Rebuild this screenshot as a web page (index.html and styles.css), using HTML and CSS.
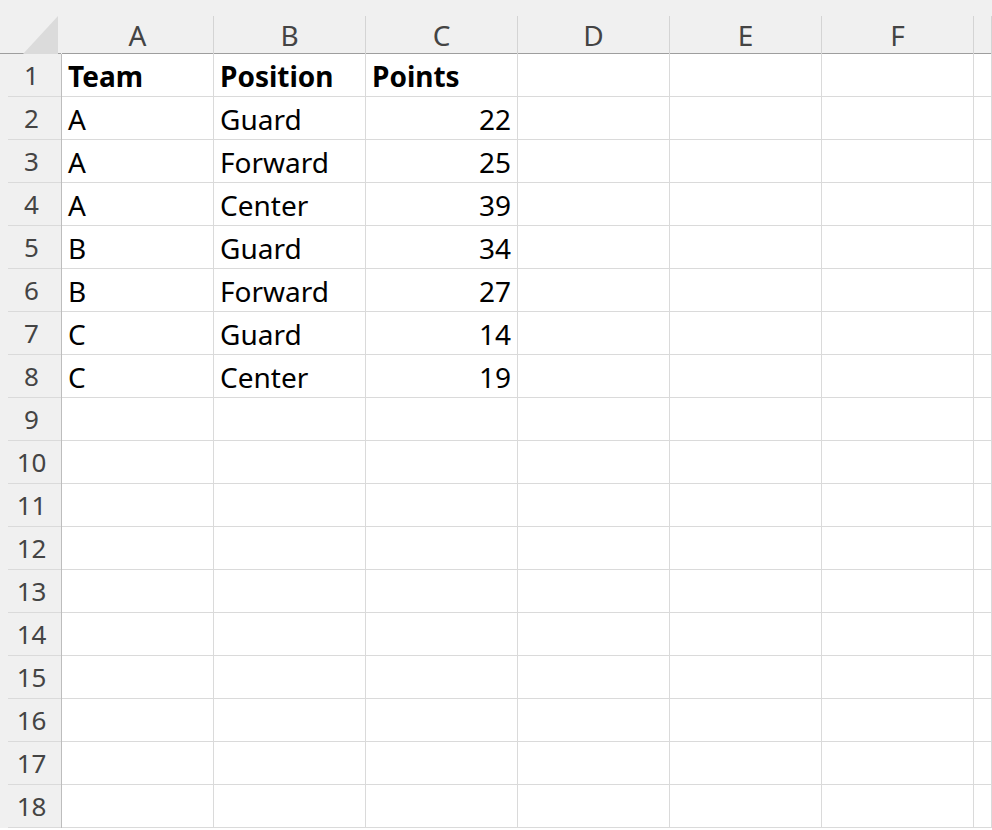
FILE: index.html
```html
<!doctype html>
<html lang="en">
    <head>
        <meta charset="utf-8">
        <title>Sheet1</title>
        <link rel="stylesheet" href="styles.css">
    </head>
    <body>
        <div class="sheet">
            <div class="row colHeads">
                <div class="corner"><div class="triangle"></div></div>
                <div class="colHead"><span>A</span></div>
                <div class="colHead"><span>B</span></div>
                <div class="colHead"><span>C</span></div>
                <div class="colHead"><span>D</span></div>
                <div class="colHead"><span>E</span></div>
                <div class="colHead"><span>F</span></div>
                <div class="colHead"><span></span></div>
            </div>

            <div class="row">
                <div class="rowHead"><span>1</span></div>
                <div class="cell bold">Team</div>
                <div class="cell bold">Position</div>
                <div class="cell bold">Points</div>
                <div class="cell"></div><div class="cell"></div><div class="cell"></div><div class="cell"></div>
            </div>
            <div class="row">
                <div class="rowHead"><span>2</span></div>
                <div class="cell">A</div>
                <div class="cell">Guard</div>
                <div class="cell num">22</div>
                <div class="cell"></div><div class="cell"></div><div class="cell"></div><div class="cell"></div>
            </div>
            <div class="row">
                <div class="rowHead"><span>3</span></div>
                <div class="cell">A</div>
                <div class="cell">Forward</div>
                <div class="cell num">25</div>
                <div class="cell"></div><div class="cell"></div><div class="cell"></div><div class="cell"></div>
            </div>
            <div class="row">
                <div class="rowHead"><span>4</span></div>
                <div class="cell">A</div>
                <div class="cell">Center</div>
                <div class="cell num">39</div>
                <div class="cell"></div><div class="cell"></div><div class="cell"></div><div class="cell"></div>
            </div>
            <div class="row">
                <div class="rowHead"><span>5</span></div>
                <div class="cell">B</div>
                <div class="cell">Guard</div>
                <div class="cell num">34</div>
                <div class="cell"></div><div class="cell"></div><div class="cell"></div><div class="cell"></div>
            </div>
            <div class="row">
                <div class="rowHead"><span>6</span></div>
                <div class="cell">B</div>
                <div class="cell">Forward</div>
                <div class="cell num">27</div>
                <div class="cell"></div><div class="cell"></div><div class="cell"></div><div class="cell"></div>
            </div>
            <div class="row">
                <div class="rowHead"><span>7</span></div>
                <div class="cell">C</div>
                <div class="cell">Guard</div>
                <div class="cell num">14</div>
                <div class="cell"></div><div class="cell"></div><div class="cell"></div><div class="cell"></div>
            </div>
            <div class="row">
                <div class="rowHead"><span>8</span></div>
                <div class="cell">C</div>
                <div class="cell">Center</div>
                <div class="cell num">19</div>
                <div class="cell"></div><div class="cell"></div><div class="cell"></div><div class="cell"></div>
            </div>
            <div class="row">
                <div class="rowHead"><span>9</span></div>
                <div class="cell"></div><div class="cell"></div><div class="cell"></div><div class="cell"></div><div class="cell"></div><div class="cell"></div><div class="cell"></div>
            </div>
            <div class="row">
                <div class="rowHead"><span>10</span></div>
                <div class="cell"></div><div class="cell"></div><div class="cell"></div><div class="cell"></div><div class="cell"></div><div class="cell"></div><div class="cell"></div>
            </div>
            <div class="row">
                <div class="rowHead"><span>11</span></div>
                <div class="cell"></div><div class="cell"></div><div class="cell"></div><div class="cell"></div><div class="cell"></div><div class="cell"></div><div class="cell"></div>
            </div>
            <div class="row">
                <div class="rowHead"><span>12</span></div>
                <div class="cell"></div><div class="cell"></div><div class="cell"></div><div class="cell"></div><div class="cell"></div><div class="cell"></div><div class="cell"></div>
            </div>
            <div class="row">
                <div class="rowHead"><span>13</span></div>
                <div class="cell"></div><div class="cell"></div><div class="cell"></div><div class="cell"></div><div class="cell"></div><div class="cell"></div><div class="cell"></div>
            </div>
            <div class="row">
                <div class="rowHead"><span>14</span></div>
                <div class="cell"></div><div class="cell"></div><div class="cell"></div><div class="cell"></div><div class="cell"></div><div class="cell"></div><div class="cell"></div>
            </div>
            <div class="row">
                <div class="rowHead"><span>15</span></div>
                <div class="cell"></div><div class="cell"></div><div class="cell"></div><div class="cell"></div><div class="cell"></div><div class="cell"></div><div class="cell"></div>
            </div>
            <div class="row">
                <div class="rowHead"><span>16</span></div>
                <div class="cell"></div><div class="cell"></div><div class="cell"></div><div class="cell"></div><div class="cell"></div><div class="cell"></div><div class="cell"></div>
            </div>
            <div class="row">
                <div class="rowHead"><span>17</span></div>
                <div class="cell"></div><div class="cell"></div><div class="cell"></div><div class="cell"></div><div class="cell"></div><div class="cell"></div><div class="cell"></div>
            </div>
            <div class="row">
                <div class="rowHead"><span>18</span></div>
                <div class="cell"></div><div class="cell"></div><div class="cell"></div><div class="cell"></div><div class="cell"></div><div class="cell"></div><div class="cell"></div>
            </div>
        </div>
    </body>
</html>
```

FILE: styles.css
```css
body {
    margin: 0;
    background-color: #fff;
    font-family: 'Noto Sans', 'Open Sans', sans-serif;
    overflow: hidden;
}

.sheet {
    width: 992px;
    height: 830px;
    overflow: hidden;
}

.row {
    display: grid;
    grid-template-columns: 62px repeat(6, 152px) 1fr;
    height: 43px;
}

.colHeads {
    height: 54px;
    background-color: #f0f0f0;
    border-bottom: 1px solid #9e9e9e;
    box-sizing: border-box;
}

.corner {
    padding: 16px 3px 3px 23px;
    border-right: 1px solid #f0f0f0;
}

.triangle {
    width: 100%;
    height: 100%;
    background-color: #dbdbdb;
    clip-path: polygon(100% 0, 100% 100%, 0 100%);
}

.colHead {
    padding-top: 16px;
}

.colHead span {
    display: flex;
    justify-content: center;
    align-items: center;
    height: 100%;
    border-right: 1px solid #d4d4d4;
    box-sizing: border-box;
    color: #444;
    font-size: 28px;
    padding-bottom: 3px;
}

.rowHead {
    background-color: #f0f0f0;
    border-right: 1px solid #bdbdbd;
    padding-left: 8px;
}

.rowHead span {
    display: flex;
    justify-content: center;
    align-items: center;
    height: 100%;
    border-bottom: 1px solid #dadada;
    box-sizing: border-box;
    color: #444;
    font-size: 26px;
    padding-right: 6px;
}

.cell {
    display: flex;
    align-items: center;
    border-right: 1px solid #dadada;
    border-bottom: 1px solid #dadada;
    box-sizing: border-box;
    padding: 1px 6px 0 6px;
    font-size: 28px;
    color: #000;
    white-space: nowrap;
}

.bold {
    font-weight: bold;
}

.num {
    justify-content: flex-end;
}
```
